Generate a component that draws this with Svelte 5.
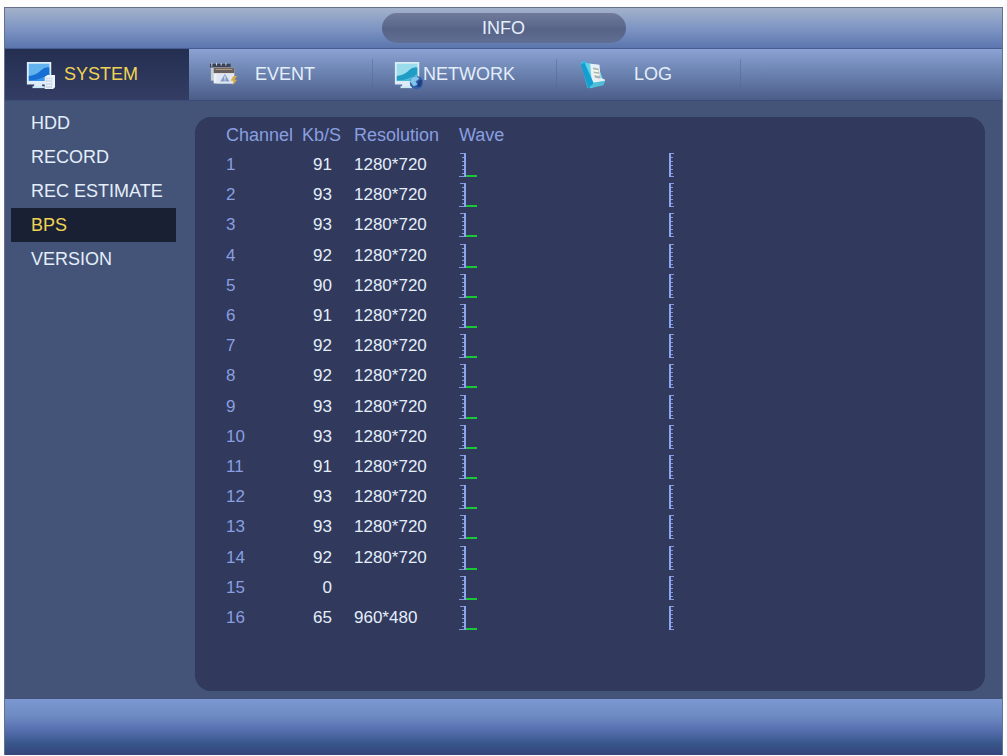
<script>
	const tabs = ["SYSTEM", "EVENT", "NETWORK", "LOG"];
	const pages = ["HDD", "RECORD", "REC ESTIMATE", "BPS", "VERSION"];
	const rates = [91, 93, 93, 92, 90, 91, 92, 92, 93, 93, 91, 93, 93, 92, 0, 65];

	const channels = rates.map((rate, i) => ({
		id: i + 1,
		rate,
		resolution: rate === 0 ? "" : i === 15 ? "960*480" : "1280*720",
	}));

	let activeTab = "SYSTEM";
	let activePage = "BPS";
</script>

<div class="screen">
	<div class="window">
		<header class="titlebar">
			<h1>INFO</h1>
		</header>

		<nav class="tabs">
			{#each tabs as tab}
				<button type="button" class:active={tab === activeTab} on:click={() => (activeTab = tab)}>
					<svg class="icon" viewBox="0 0 32 32" aria-hidden="true">
						{#if tab === "SYSTEM" || tab === "NETWORK"}
							<path d="M2 2h26v24H18l1 3H9l1-3H2z" fill="#dcecf8" />
							<path d="M4 4h22v18H4z" fill={tab === "SYSTEM" ? "#62b3ed" : "#9adceb"} />
							<path d="M4 17q9-1 13-6 4-4 9-3v14H4z" fill={tab === "SYSTEM" ? "#176fd4" : "#209dc5"} />
							<path d="M4 22q11 0 22-7v7z" fill={tab === "SYSTEM" ? "#3b98e8" : "#4cbed7"} />
							<path d="M8 28h13v2H8z" fill="#c9e7f7" />
							{#if tab === "SYSTEM"}
								<path d="M21 18l3-2h8v13l-2 2h-9z" fill="#edf3fa" />
								<path d="M22 19h7v11h-7z" fill="#cedaea" />
								<path d="M23 21h5M23 24h5M23 27h5" stroke="#f8fbff" stroke-width="1" />
							{:else}
								<circle cx="25" cy="24" r="7" fill="#315faa" />
								<path d="M20 19l5-2 3 3-4 3 2 3-4 2-4-5z" fill="#82c7e9" />
								<path d="M27 22l4-1-1 7-4 1z" fill="#203d81" />
							{/if}
						{:else if tab === "EVENT"}
							<path d="M2 5h20v17H2z" fill="#c4ccd7" />
							<path d="M1 4h22v4H1z" fill="#38425b" />
							<path d="M3 3v4M8 3v3M13 3v3M18 3v3" stroke="#d9d7cd" stroke-width="1" />
							<path d="M5 8h22v17H5z" fill="#eef0f3" />
							<path d="M5 8h22v6H5z" fill="#65605d" />
							<path d="M7 10h18" stroke="#c1a486" stroke-width="1" />
							<path d="M8 15h18v10H8z" fill="#dfe7f4" />
							<path d="M17 15l-5 8h10z" fill="#849cc6" />
							<path d="M17 17v4M17 22v1" stroke="#fff" stroke-width="1" />
							<path d="M26 17l-3 5h3l-1 5 5-6h-3l3-4z" fill="#d9ad42" />
						{:else}
							<path d="M4 2l5-1 7 27-5 2z" fill="#38bce1" />
							<path d="M9 3l13 2 7 19-4 3-11 3-5-17z" fill="#62d2eb" />
							<path d="M14 4l10 1 1 14 5 2-2 5-12-1z" fill="#e7f1f5" />
							<path d="M17 8l6 1 2 11-6-1z" fill="#acb6b8" />
							<path d="M17 11l6 1M18 15l6 1" stroke="#f8f8ea" stroke-width="2" />
							<path d="M8 3l10 22-6 5L4 5z" fill="#159fd1" />
							<path d="M18 24l12-2-2 5-14 3z" fill="#4ebed9" />
						{/if}
					</svg>
					<span>{tab}</span>
				</button>
			{/each}
		</nav>

		<div class="content">
			<aside class="sidebar">
				{#each pages as page}
					<button type="button" class:active={page === activePage} on:click={() => (activePage = page)}>
						{page}
					</button>
				{/each}
			</aside>

			<main class="panel">
				<table>
					<thead>
						<tr>
							<th class="channel">Channel</th>
							<th class="rate">Kb/S</th>
							<th class="resolution">Resolution</th>
							<th>Wave</th>
						</tr>
					</thead>
					<tbody>
						{#each channels as channel}
							<tr>
								<td class="id">{channel.id}</td>
								<td class="rate">{channel.rate}</td>
								<td>{channel.resolution}</td>
								<td>
									<svg class="wave" viewBox="0 0 216 26" aria-hidden="true">
										<path
											d="M1 1.5h5M3 5.5h3M3 9.5h3M3 13.5h3M3 17.5h3M3 21.5h3M0 24.5h7M211 1.5h4M211 5.5h3M211 9.5h3M211 13.5h3M211 17.5h3M211 21.5h3M211 24.5h4"
											stroke="#8299de"
										/>
										<path d="M6 1v24M211 1v24" stroke="#8ba5ee" stroke-width="2" />
										<path d="M7 24h11" stroke="#18c836" stroke-width="2" />
									</svg>
								</td>
							</tr>
						{/each}
					</tbody>
				</table>
			</main>
		</div>

		<footer></footer>
	</div>
</div>

<style>
	:global(body) {
		margin: 0;
		background: #fdfdfe;
	}

	.screen {
		display: flex;
		box-sizing: border-box;
		min-height: 100vh;
		padding: 7px 4px 1px;
		font-family: "Liberation Sans", Arial, sans-serif;
		font-size: 18px;
		color: #e4eefb;
	}

	.window {
		display: flex;
		flex: 1;
		flex-direction: column;
		border: 1px solid #64708d;
		border-bottom: 0;
		background: #445479;
	}

	.titlebar {
		display: flex;
		justify-content: center;
		padding: 5px 0;
		border-bottom: 1px solid #455d92;
		background: linear-gradient(#a3b1ca, #7f96c4 50%, #5b75ae);
	}

	h1 {
		width: 244px;
		margin: 0;
		border-radius: 15px;
		background: linear-gradient(#707b9b, #566387 55%, #626f94);
		font-size: 18px;
		font-weight: normal;
		line-height: 30px;
		text-align: center;
	}

	button {
		border: 0;
		background: none;
		color: inherit;
		font: inherit;
		cursor: pointer;
	}

	.tabs {
		display: flex;
		border-bottom: 1px solid #3a4c77;
		background: linear-gradient(#8ca2d3, #6c84b2 45%, #4c5d89);
	}

	.tabs button {
		display: flex;
		align-items: center;
		width: 184px;
		height: 51px;
		padding: 0 42px 0 20px;
		background: linear-gradient(#53689988, #53689988) right center / 1px 32px no-repeat;
	}

	.tabs button.active {
		background: linear-gradient(#242e50, #343e65);
		color: #f1d354;
	}

	.tabs span {
		flex: 1;
		text-align: center;
	}

	.icon {
		flex: none;
		width: 30px;
		height: 30px;
	}

	.content {
		display: flex;
		flex: 1;
	}

	.sidebar {
		display: flex;
		flex-direction: column;
		width: 165px;
		padding: 5px 19px 0 6px;
	}

	.sidebar button {
		height: 34px;
		padding: 0 0 0 20px;
		text-align: left;
		white-space: nowrap;
	}

	.sidebar button.active {
		background: #1a2033;
		color: #f1d354;
	}

	.panel {
		flex: 1;
		margin: 16px 17px 8px 0;
		padding: 3px 31px 0;
		border-radius: 16px;
		background: #31395c;
	}

	table {
		height: 513px;
		border-collapse: collapse;
		font-size: 17px;
	}

	th,
	td {
		height: 30px;
		padding: 0;
		text-align: left;
		white-space: nowrap;
	}

	th {
		color: #899fe0;
		font-size: 18px;
		font-weight: normal;
	}

	.id {
		color: #899fe0;
	}

	.channel {
		width: 76px;
	}

	th.rate {
		width: 52px;
	}

	td.rate {
		padding-right: 22px;
		text-align: right;
	}

	.resolution {
		width: 105px;
	}

	.wave {
		display: block;
		width: 216px;
		height: 26px;
	}

	footer {
		height: 56px;
		background: linear-gradient(#7b98d2, #6f8bc3 30%, #5670b0 55%, #38558a 80%, #36457b);
	}
</style>
